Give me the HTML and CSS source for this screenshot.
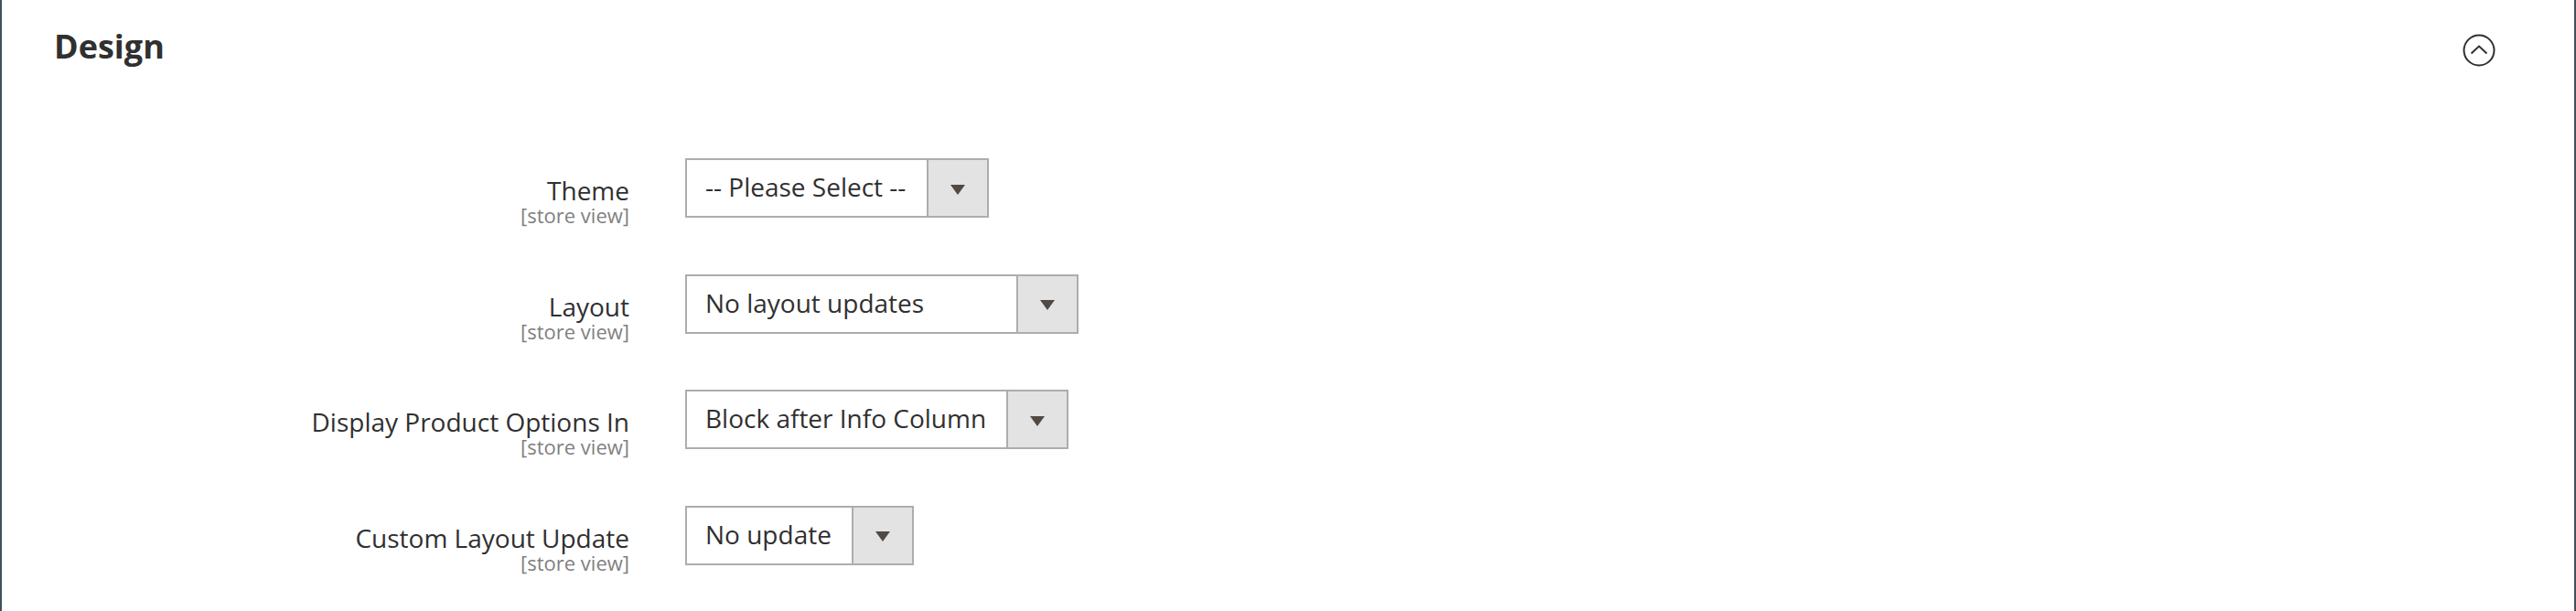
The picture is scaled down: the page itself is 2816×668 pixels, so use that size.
FILE: index.html
```html
<!DOCTYPE html>
<html lang="en">
<head>
<meta charset="utf-8">
<title>Design</title>
<link rel="stylesheet" href="styles.css">
</head>
<body>
<div class="panel">
  <div class="panel-header">
    <h2 class="panel-title">Design</h2>
    <svg class="toggle" width="36" height="36" viewBox="0 0 36 36" aria-hidden="true">
      <circle cx="18" cy="18" r="16.5" fill="none" stroke="#303030" stroke-width="2"/>
      <polyline points="9.5,21.5 18,13.5 26.5,21.5" fill="none" stroke="#303030" stroke-width="2"/>
    </svg>
  </div>
  <div class="fields">
    <div class="field">
      <div class="label"><span class="label-text">Theme</span><span class="scope">[store view]</span></div>
      <div class="select"><span class="select-value w-theme">-- Please Select --</span><span class="select-arrow"><span class="tri"></span></span></div>
    </div>
    <div class="field">
      <div class="label"><span class="label-text">Layout</span><span class="scope">[store view]</span></div>
      <div class="select"><span class="select-value w-layout">No layout updates</span><span class="select-arrow"><span class="tri"></span></span></div>
    </div>
    <div class="field">
      <div class="label"><span class="label-text">Display Product Options In</span><span class="scope">[store view]</span></div>
      <div class="select"><span class="select-value w-display">Block after Info Column</span><span class="select-arrow"><span class="tri"></span></span></div>
    </div>
    <div class="field">
      <div class="label"><span class="label-text">Custom Layout Update</span><span class="scope">[store view]</span></div>
      <div class="select"><span class="select-value w-custom">No update</span><span class="select-arrow"><span class="tri"></span></span></div>
    </div>
  </div>
</div>
</body>
</html>
```

FILE: styles.css
```css
html, body {
  margin: 0;
  padding: 0;
  background: #ffffff;
}
body {
  font-family: "Open Sans", "Noto Sans", sans-serif;
  color: #303030;
}
.panel {
  box-sizing: border-box;
  height: 668px;
  border-left: 2px solid #3f525c;
  border-right: 2px solid #3f525c;
  background: #ffffff;
  overflow: hidden;
}
.panel-header {
  display: flex;
  align-items: flex-start;
  justify-content: space-between;
  height: 36px;
  padding: 33px 86px 0 57px;
}
.panel-title {
  margin: 0;
  font-size: 36px;
  line-height: 36px;
  font-weight: 700;
  color: #303030;
}
.toggle {
  display: block;
  margin-top: 3.5px;
}
.fields {
  margin-top: 104px;
  display: flex;
  flex-direction: column;
  gap: 52.5px;
}
.field {
  display: grid;
  grid-template-columns: 686px auto;
  column-gap: 61px;
  align-items: start;
}
.label {
  display: flex;
  flex-direction: column;
  align-items: flex-end;
  text-align: right;
  padding-top: 20px;
}
.label-text {
  font-size: 28px;
  line-height: 30px;
  color: #303030;
}
.scope {
  font-size: 22px;
  line-height: 24px;
  color: #808080;
}
.select {
  display: inline-flex;
  justify-self: start;
  box-sizing: border-box;
  height: 65px;
  border: 2px solid #adadad;
  background: #ffffff;
}
.select-value {
  box-sizing: border-box;
  padding: 0 0 3px 20px;
  font-size: 28px;
  line-height: 58px;
  color: #303030;
  white-space: nowrap;
}
.w-theme { width: 262px; }
.w-layout { width: 360px; }
.w-display { width: 349px; }
.w-custom { width: 180px; }
.select-arrow {
  width: 64px;
  border-left: 2px solid #adadad;
  background: #e3e3e3;
  display: flex;
  align-items: center;
  justify-content: center;
}
.tri {
  width: 0;
  height: 0;
  border-left: 8px solid transparent;
  border-right: 8px solid transparent;
  border-top: 11px solid #514943;
  margin-top: 3px;
}
```
